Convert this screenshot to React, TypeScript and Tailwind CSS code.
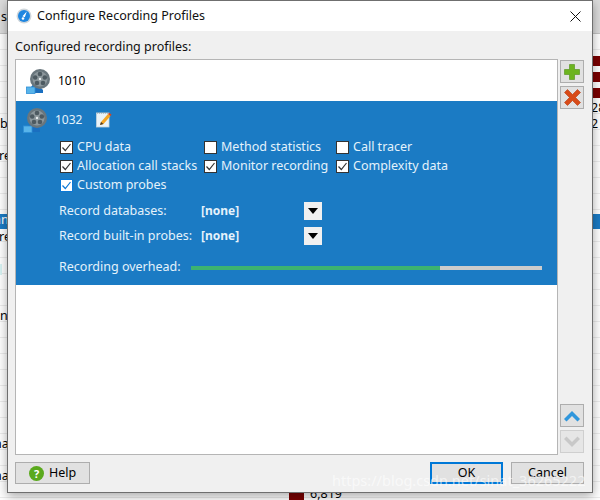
import React from "react";

const font = { fontFamily: '"Noto Sans", sans-serif' };

/* =====================
   ICONS
===================== */
function ReelIcon() {
  return (
    <svg width="26" height="26" viewBox="0 0 26 26" className="shrink-0">
      <path d="M3 25v-6h2l4-5 8 8v3z" fill="#1a6fc0" />
      <rect x="0.5" y="19" width="8.5" height="6.5" fill="#58b4ea" stroke="#2f8fd8" strokeWidth="0.8" />
      <circle cx="14" cy="11" r="10" fill="#69767d" />
      <circle cx="14" cy="11" r="7.5" fill="#8c979c" />
      <circle cx="14" cy="6" r="2.3" fill="#4d5a61" />
      <circle cx="18.8" cy="9.5" r="2.3" fill="#4d5a61" />
      <circle cx="17" cy="15" r="2.3" fill="#4d5a61" />
      <circle cx="11" cy="15" r="2.3" fill="#4d5a61" />
      <circle cx="9.2" cy="9.5" r="2.3" fill="#4d5a61" />
      <circle cx="14" cy="11" r="1.2" fill="#e8ecee" />
    </svg>
  );
}

function NoteIcon() {
  return (
    <svg width="16" height="16" viewBox="0 0 16 16" className="shrink-0">
      <rect x="0.5" y="1" width="12.5" height="14" fill="#eaf3f8" stroke="#c4d4dc" strokeWidth="0.8" />
      <path d="M1 1h12" stroke="#8b9aa3" strokeDasharray="1 1" />
      <path d="M4 13l1-3 7-8 2.5 2-7 8z" fill="#f5a623" />
      <path d="M12 2l1.2-1.2 2.4 2-1.1 1.2z" fill="#d9451e" />
      <path d="M4 13l1-3 2.5 2z" fill="#4a3a28" />
    </svg>
  );
}

function CheckBox({ checked, focused }: { checked: boolean; focused?: boolean }) {
  return (
    <span
      className={[
        "flex h-[13px] w-[13px] shrink-0 items-center justify-center bg-white border",
        focused ? "border-[#0a78d6]" : "border-[#333333]",
      ].join(" ")}
    >
      {checked && (
        <svg width="11" height="11" viewBox="0 0 11 11">
          <path
            d="M1.5 5.5l2.8 3L9.5 2"
            fill="none"
            stroke={focused ? "#0a78d6" : "#333333"}
            strokeWidth="1.2"
          />
        </svg>
      )}
    </span>
  );
}

function Check({ label, checked, focused, w }: { label: string; checked: boolean; focused?: boolean; w: string }) {
  return (
    <div className={["flex items-center gap-1 h-[19px]", w].join(" ")}>
      <CheckBox checked={checked} focused={focused} />
      <span className="whitespace-nowrap text-[#e4f2fb]">{label}</span>
    </div>
  );
}

function ComboRow({ label }: { label: string }) {
  return (
    <div className="flex h-[18px] items-center">
      <span className="w-[142px] whitespace-nowrap text-[#e4f2fb]">{label}</span>
      <span className="w-[103px] text-[12px] font-bold text-[#e4f2fb]">[none]</span>
      <span className="flex h-[18px] w-[18px] items-center justify-center bg-[#f0f0f0]">
        <svg width="10" height="6" viewBox="0 0 10 6">
          <path d="M0 0h10L5 6z" fill="#000000" />
        </svg>
      </span>
    </div>
  );
}

function SideButton({ children, disabled }: { children: React.ReactNode; disabled?: boolean }) {
  return (
    <div
      className={[
        "flex h-[23px] w-[24px] items-center justify-center border",
        disabled ? "border-[#cfcfcf] bg-[#e6e6e6]" : "border-[#adadad] bg-[#e1e1e1]",
      ].join(" ")}
    >
      {children}
    </div>
  );
}

function FootButton({ label, primary, w }: { label: string; primary?: boolean; w: string }) {
  return (
    <div
      className={[
        "flex h-[22px] items-center justify-center bg-[#e1e1e1] text-black",
        w,
        primary ? "border-2 border-[#0078d7]" : "border border-[#adadad]",
      ].join(" ")}
    >
      {label}
    </div>
  );
}

/* =====================
   BACKGROUND WINDOW
===================== */
const rowKeys = Array.from({ length: 29 }, (_, i) => i);

function Backdrop() {
  return (
    <div className="absolute inset-0 bg-white text-[12.5px] text-black" style={font}>
      <div className="h-[34px] bg-[#dcdcdc] border-b border-[#c4c4c4]" />
      <div className="flex flex-col">
        {rowKeys.map((i) => (
          <div key={i} className="h-[16px] border-b border-[#ececec]" />
        ))}
      </div>
      <div className="absolute left-[592px] top-[56px] h-[10px] w-[8px] bg-[#7a0000]" />
      <div className="absolute left-[592px] top-[72px] h-[10px] w-[8px] bg-[#7a0000]" />
      <div className="absolute left-[592px] top-[88px] h-[10px] w-[8px] bg-[#7a0000]" />
      <div className="absolute left-[592px] top-[214px] h-[15px] w-[8px] bg-[#1b7bc4]" />
      <div className="absolute left-0 top-[214px] h-[15px] w-[8px] bg-[#1b7bc4]" />
      <div className="absolute left-0 top-[264px] h-[11px] w-[2px] bg-[#d8f4f4]" />
      <span className="absolute left-[1px] top-[8px]">s</span>
      <span className="absolute left-[591px] top-[99px]">28</span>
      <span className="absolute left-[591px] top-[115px]">2</span>
      <span className="absolute left-0 top-[115px]">b</span>
      <span className="absolute left-[-1px] top-[147px]">re</span>
      <span className="absolute left-[-6px] top-[211px] text-white">an</span>
      <span className="absolute left-[-1px] top-[228px]">re</span>
      <span className="absolute left-0 top-[307px]">n</span>
      <span className="absolute left-[-6px] top-[435px]">na</span>
      <span className="absolute left-[-6px] top-[467px]">na</span>
      <div className="absolute left-[289px] top-[492px] h-[8px] w-[15px] bg-[#7a0000]" />
      <span className="absolute left-[310px] top-[485px]">6,819</span>
    </div>
  );
}

export default function App() {
  return (
    <div className="relative h-[500px] w-[600px] overflow-hidden" style={font}>
      <Backdrop />

      {/* DIALOG */}
      <div className="absolute left-[7px] top-0 flex h-[493px] w-[586px] flex-col border border-[#6f6f6f] bg-[#f0f0f0] text-[12.5px] text-[#111111] shadow-[0_3px_10px_rgba(0,0,0,0.35)]">
        {/* TITLE */}
        <div className="flex h-[30px] shrink-0 items-center bg-white pl-[8px] pr-[11px]">
          <svg width="16" height="16" viewBox="0 0 16 16" className="shrink-0">
            <circle cx="8" cy="8" r="7.5" fill="#cfd6db" />
            <circle cx="8" cy="8" r="6" fill="#1f86e0" />
            <path d="M10.8 3.5L8.8 9.2 6.4 8.3z" fill="#ffffff" />
            <circle cx="7" cy="10.5" r="1.3" fill="#ffffff" />
          </svg>
          <span className="ml-[5px] text-[12.5px]">Configure Recording Profiles</span>
          <svg width="11" height="11" viewBox="0 0 11 11" className="ml-auto">
            <path d="M0.5 0.5l10 10M10.5 0.5l-10 10" stroke="#111111" strokeWidth="1" />
          </svg>
        </div>

        {/* BODY */}
        <div className="flex flex-1 flex-col pl-[7px] pr-[8px] pt-[6px]">
          <div className="h-[22px] leading-[20px]">Configured recording profiles:</div>
          <div className="flex h-[396px] gap-[2px]">
            <div className="w-[543px] border border-[#b5b5b5] bg-white">
              <div className="flex h-[41px] items-center pl-[10px]">
                <ReelIcon />
                <span className="ml-[6px] text-[12px] text-black">1010</span>
              </div>
              <div className="h-[184px] bg-[#1b7bc4] pt-[2px]">
                <div className="flex h-[33px] items-center pl-[7px]">
                  <ReelIcon />
                  <span className="ml-[6px] w-[41px] text-[12px] text-[#e4f2fb]">1032</span>
                  <NoteIcon />
                </div>
                <div className="pl-[44px] pt-[2px]">
                  <div className="flex">
                    <Check w="w-[144px]" label="CPU data" checked />
                    <Check w="w-[132px]" label="Method statistics" checked={false} />
                    <Check w="w-[120px]" label="Call tracer" checked={false} />
                  </div>
                  <div className="flex">
                    <Check w="w-[144px]" label="Allocation call stacks" checked />
                    <Check w="w-[132px]" label="Monitor recording" checked />
                    <Check w="w-[120px]" label="Complexity data" checked />
                  </div>
                  <Check w="w-[144px]" label="Custom probes" checked focused />
                </div>
                <div className="flex flex-col gap-[7px] pl-[43px] pt-[7px]">
                  <ComboRow label="Record databases:" />
                  <ComboRow label="Record built-in probes:" />
                </div>
                <div className="mt-[13px] flex h-[19px] items-center pl-[43px]">
                  <span className="w-[132px] whitespace-nowrap text-[#e4f2fb]">Recording overhead:</span>
                  <div className="h-[4px] w-[351px] bg-[#cccccc]">
                    <div className="h-full bg-[#3cb371]" style={{ width: "71%" }} />
                  </div>
                </div>
              </div>
            </div>

            {/* SIDE BUTTONS */}
            <div className="flex flex-col justify-between py-[1px]">
              <div className="flex flex-col gap-[3px]">
                <SideButton>
                  <svg width="16" height="16" viewBox="0 0 16 16">
                    <path d="M5.5 0.5h5v5h5v5h-5v5h-5v-5h-5v-5h5z" fill="#6cb41e" stroke="#4f8f12" strokeWidth="0.6" />
                  </svg>
                </SideButton>
                <SideButton>
                  <svg width="17" height="17" viewBox="0 0 17 17">
                    <path d="M3.5 0.5l5 5 5-5 3 3-5 5 5 5-3 3-5-5-5 5-3-3 5-5-5-5z" fill="#d84a17" stroke="#b63a0f" strokeWidth="0.6" />
                  </svg>
                </SideButton>
              </div>
              <div className="flex flex-col gap-[3px] pb-[1px]">
                <SideButton>
                  <svg width="18" height="12" viewBox="0 0 18 12">
                    <path d="M1 9l8-8 8 8-2.5 2.5L9 6l-5.5 5.5z" fill="#2f96dc" />
                  </svg>
                </SideButton>
                <SideButton disabled>
                  <svg width="18" height="12" viewBox="0 0 18 12">
                    <path d="M1 3l8 8 8-8L14.5 0.5 9 6 3.5 0.5z" fill="#c8c8c8" />
                  </svg>
                </SideButton>
              </div>
            </div>
          </div>

          {/* FOOTER */}
          <div className="mt-[7px] flex items-start">
            <div className="flex h-[22px] w-[75px] items-center justify-center gap-[5px] border border-[#adadad] bg-[#e1e1e1] text-black">
              <svg width="15" height="15" viewBox="0 0 15 15">
                <circle cx="7.5" cy="7.5" r="7.5" fill="#5aa91c" />
                <text x="7.5" y="11.5" textAnchor="middle" fontSize="11" fontWeight="700" fill="#ffffff">?</text>
              </svg>
              <span>Help</span>
            </div>
            <div className="ml-auto flex gap-[8px]">
              <FootButton label="OK" primary w="w-[73px]" />
              <FootButton label="Cancel" w="w-[73px]" />
            </div>
          </div>
        </div>
      </div>

      {/* WATERMARK */}
      <div className="absolute left-[332px] top-[470px] whitespace-nowrap text-[14.5px] text-white/60">
        https://blog.csdn.net/sinat_36265222
      </div>
    </div>
  );
}
